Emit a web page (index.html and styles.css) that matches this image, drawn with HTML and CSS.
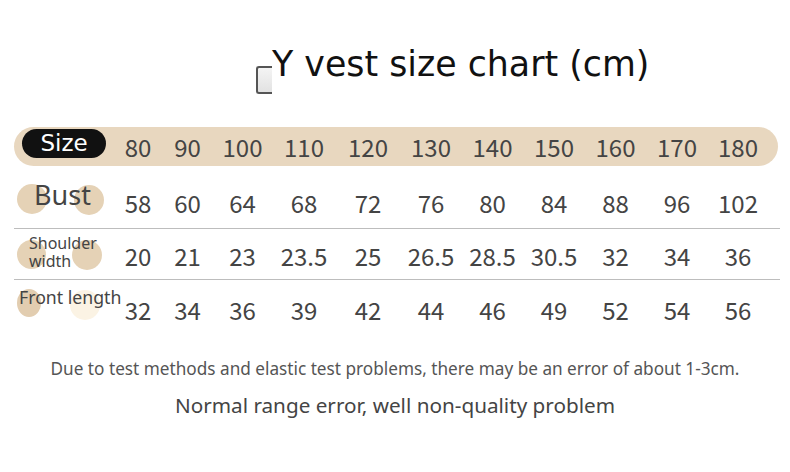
FILE: index.html
```html
<!DOCTYPE html>
<html>
<head>
<meta charset="utf-8">
<link rel="stylesheet" href="styles.css">
</head>
<body>
<div class="page">
  <h1 class="title"><span class="mark"></span>Y vest size chart (cm)</h1>
  <div class="chart">
    <div class="row head">
      <div class="label"><span class="pill">Size</span></div>
      <div>80</div><div>90</div><div>100</div><div>110</div><div>120</div><div>130</div><div>140</div><div>150</div><div>160</div><div>170</div><div>180</div>
    </div>
    <div class="row bust">
      <div class="label"><span class="dot d1"></span><span class="dot d2"></span><span class="lt">Bust</span></div>
      <div>58</div><div>60</div><div>64</div><div>68</div><div>72</div><div>76</div><div>80</div><div>84</div><div>88</div><div>96</div><div>102</div>
    </div>
    <div class="row shoulder">
      <div class="label"><span class="dot d1"></span><span class="dot d2"></span><span class="lt">Shoulder<br>width</span></div>
      <div>20</div><div>21</div><div>23</div><div>23.5</div><div>25</div><div>26.5</div><div>28.5</div><div>30.5</div><div>32</div><div>34</div><div>36</div>
    </div>
    <div class="row front">
      <div class="label"><span class="dot d3"></span><span class="dot d4"></span><span class="lt">Front length</span></div>
      <div>32</div><div>34</div><div>36</div><div>39</div><div>42</div><div>44</div><div>46</div><div>49</div><div>52</div><div>54</div><div>56</div>
    </div>
  </div>
  <p class="note">Due to test methods and elastic test problems, there may be an error of about 1-3cm.</p>
  <p class="note2">Normal range error, well non-quality problem</p>
</div>
</body>
</html>
```
FILE: styles.css
```css
html, body {
  margin: 0;
  padding: 0;
  background: #fff;
}
.page {
  width: 790px;
  height: 472px;
  font-family: "Noto Sans CJK SC", "Noto Sans", sans-serif;
  color: #444;
  overflow: hidden;
}
.title {
  margin: 0;
  padding-top: 41px;
  padding-left: 256px;
  height: 89px;
  box-sizing: border-box;
  font-family: "DejaVu Sans", sans-serif;
  font-weight: 400;
  font-size: 34.8px;
  line-height: 46px;
  color: #111;
  display: flex;
  align-items: flex-start;
}
.mark {
  display: inline-block;
  flex: none;
  width: 16px;
  height: 28px;
  margin-top: 25px;
  border: 2px solid #555;
  border-right: none;
  border-radius: 3px 0 0 3px;
  background: linear-gradient(#f4f4f4, #e2e2e2);
  box-sizing: border-box;
}
.chart {
  margin-top: 38px;
  margin-left: 14px;
  width: 766px;
}
.row {
  display: grid;
  grid-template-columns: 100px 48px 51px 59px 64px 64px 62px 61px 62px 61px 62px 60px;
  align-items: center;
  font-size: 24px;
  text-align: center;
}
.row > div {
  line-height: 1;
}
.head {
  width: 764px;
  height: 39px;
  background: #e8d7bf;
  border-radius: 20px;
}
.head .label {
  text-align: left;
  padding-left: 8px;
}
.pill {
  display: inline-block;
  width: 84px;
  height: 29px;
  line-height: 29px;
  background: #111;
  color: #fff;
  border-radius: 15px;
  text-align: center;
  font-family: "DejaVu Sans", sans-serif;
  font-size: 23px;
  margin-top: 2px;
}
.bust, .shoulder {
  border-bottom: 1px solid #bdbdbd;
}
.bust { height: 62px; }
.shoulder { height: 50px; }
.front { height: 55px; }
.bust > div:not(.label) { padding-top: 12px; }
.shoulder > div:not(.label) { padding-top: 4px; }
.front > div:not(.label) { padding-top: 4px; }
.label {
  position: relative;
  height: 100%;
}
.dot {
  position: absolute;
  border-radius: 50%;
  background: #e5d2b6;
}
.bust .d1 { left: 3px; top: 18px; width: 30px; height: 30px; }
.bust .d2 { left: 60px; top: 19px; width: 30px; height: 30px; }
.shoulder .d1 { left: 3px; top: 11px; width: 29px; height: 29px; }
.shoulder .d2 { left: 58px; top: 11px; width: 30px; height: 30px; }
.front .d3 { left: 3px; top: 9px; width: 24px; height: 28px; background: #e2cdb0; }
.front .d4 { left: 56px; top: 10px; width: 30px; height: 30px; background: #fbf3e4; }
.lt {
  position: relative;
  display: block;
  text-align: left;
  font-family: "Noto Sans", sans-serif;
}
.bust .lt {
  font-size: 27px;
  line-height: 30px;
  padding-left: 20px;
  padding-top: 14px;
}
.shoulder .lt {
  font-size: 16px;
  line-height: 18px;
  padding-left: 15px;
  padding-top: 5px;
}
.front .lt {
  font-size: 17.7px;
  line-height: 20px;
  padding-left: 5px;
  padding-top: 7px;
  white-space: nowrap;
}
.note {
  margin: 22px 0 0;
  text-align: center;
  font-family: "Noto Sans", sans-serif;
  font-size: 17.2px;
  color: #555;
  line-height: 24px;
}
.note2 {
  margin: 11px 0 0;
  text-align: center;
  font-family: "Noto Sans", sans-serif;
  font-size: 20.7px;
  color: #444;
  line-height: 26px;
}
```
